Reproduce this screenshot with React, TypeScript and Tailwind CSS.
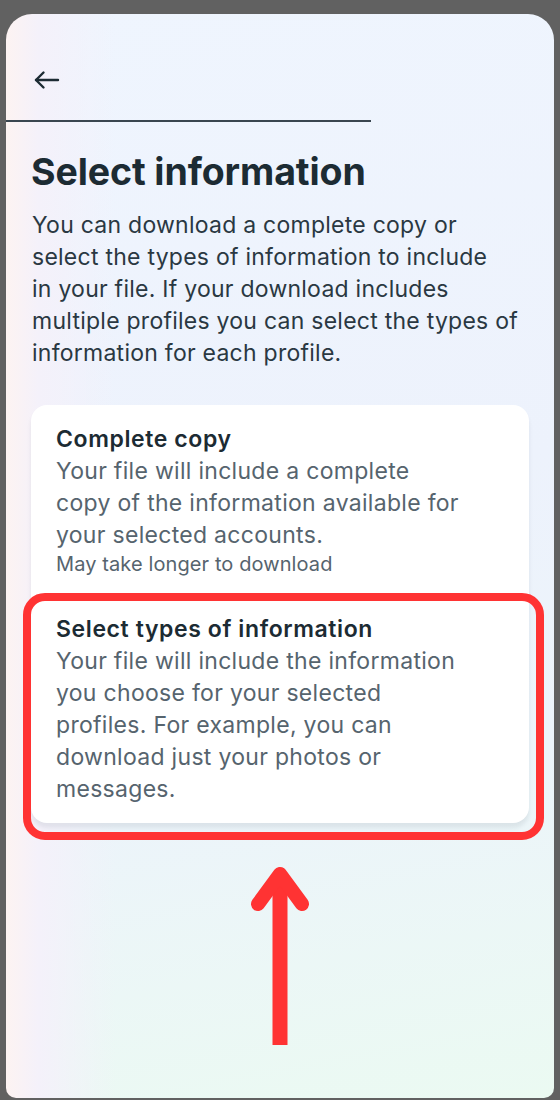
const BackArrow = () => (
  <svg width="27" height="20" viewBox="0 0 27 20" fill="none" stroke="#1c2b33" strokeWidth="2.4" strokeLinecap="round" strokeLinejoin="round">
    <path d="M25 10H3" />
    <path d="M10.5 2.5 3 10l7.5 7.5" />
  </svg>
);

const PointerArrow = () => (
  <svg width="60" height="186" viewBox="0 0 60 186" className="mx-auto block">
    <rect x="22.5" y="16" width="15" height="170" fill="#ff3333" />
    <path d="M8 45 30 15 52 45" fill="none" stroke="#ff3333" strokeWidth="14" strokeLinecap="round" strokeLinejoin="round" />
  </svg>
);

const Lines = ({ lines }: { lines: string[] }) => (
  <>
    {lines.map((l, i) => (
      <span key={i} className="block whitespace-nowrap">
        {l}
      </span>
    ))}
  </>
);

export default function App() {
  return (
    <div className="min-h-screen bg-[#616161] px-[6px] pt-[14px] font-['Inter',sans-serif]">
      <div className="h-[1084px] overflow-hidden rounded-t-[26px] rounded-b-[10px] bg-[linear-gradient(90deg,#fdf3f2_0%,#f4f1fa_6%,rgba(238,243,252,0)_20%),linear-gradient(170deg,#eff5fe_0%,#edf2fc_45%,#ecf4fa_70%,#ebfaf2_100%)] px-[25px]">
        {/* Header */}
        <div className="pt-[56px]">
          <div className="pl-[2px]">
            <BackArrow />
          </div>
          <div className="-ml-[25px] mt-[30px] h-[1.5px] w-[365px] bg-[#3a4650]" />
        </div>

        <h1 className="mt-[28px] text-[37.5px] font-bold leading-[44px] tracking-[-0.1px] text-[#1c2b33]">
          Select information
        </h1>

        <p className="mt-[15px] pl-[1px] text-[23px] leading-[32px] tracking-[0.25px] text-[#2a3842]">
          <Lines
            lines={[
              'You can download a complete copy or',
              'select the types of information to include',
              'in your file. If your download includes',
              'multiple profiles you can select the types of',
              'information for each profile.',
            ]}
          />
        </p>

        {/* Options card */}
        <div className="mt-[36px] rounded-[16px] bg-white shadow-[0_5px_4px_rgba(28,43,51,0.08)]">
          <div className="px-[25px] py-[18px]">
            <h2 className="text-[23px] font-semibold leading-[32px] tracking-[0.6px] text-[#1c2b33]">Complete copy</h2>
            <p className="text-[23px] leading-[32px] tracking-[0.3px] text-[#56646e]">
              <Lines
                lines={[
                  'Your file will include a complete',
                  'copy of the information available for',
                  'your selected accounts.',
                ]}
              />
            </p>
            <p className="text-[20px] leading-[26px] tracking-[0.1px] text-[#56646e]">May take longer to download</p>
          </div>

          <div className="relative px-[25px] pt-[18px] pb-[18px]">
            <h2 className="text-[23px] font-semibold leading-[32px] tracking-[0.6px] text-[#1c2b33]">
              Select types of information
            </h2>
            <p className="text-[23px] leading-[32px] tracking-[0.3px] text-[#56646e]">
              <Lines
                lines={[
                  'Your file will include the information',
                  'you choose for your selected',
                  'profiles. For example, you can',
                  'download just your photos or',
                  'messages.',
                ]}
              />
            </p>
            {/* red annotation */}
            <div className="pointer-events-none absolute -top-[2px] -left-[8px] -right-[15px] -bottom-[17px] rounded-[22px] border-[8px] border-[#ff3333]" />
          </div>
        </div>

        <div className="mt-[36px]">
          <PointerArrow />
        </div>
      </div>
    </div>
  );
}
